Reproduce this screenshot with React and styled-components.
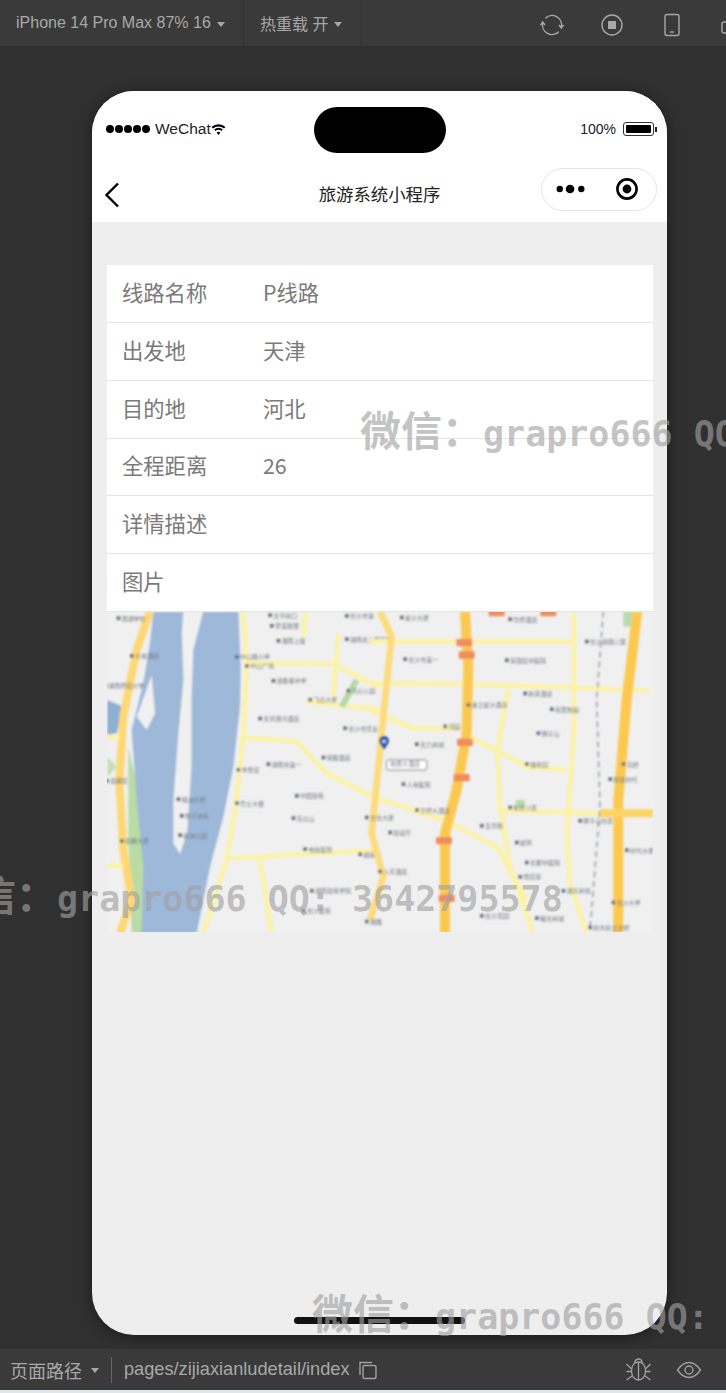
import React from "react";
import styled, { createGlobalStyle } from "styled-components";

const CJK = `"Liberation Sans", "Noto Sans CJK SC", sans-serif`;

const rows = [
  { label: "线路名称", value: "P线路" },
  { label: "出发地", value: "天津" },
  { label: "目的地", value: "河北" },
  { label: "全程距离", value: "26" },
  { label: "详情描述", value: "" },
  { label: "图片", value: "" },
];

// map coordinates are in 3x units, one group for each half of the picture
const leftPale = [
  "M430 30 L440 200 L430 400 L410 600 L380 780 L310 1000",
  "M430 412 L590 425 L680 520 L830 595",
  "M440 190 L700 192 L840 262",
  "M715 100 L700 290",
  "M615 35 L612 110",
  "M620 305 L840 328",
  "M390 775 L840 750",
  "M480 780 L515 1000",
  "M20 410 L60 412",
  "M20 795 L70 800",
];
const leftLabels = [
  [65, 62, "南湖学校"], [520, 53, "太平街口"], [525, 85, "贾谊故居"], [545, 130, "湘南上座"],
  [750, 125, "湖南省人民医院"], [750, 55, "长沙市第"], [105, 175, "大信酒店"], [420, 178, "中山路小学"],
  [450, 205, "中山广场"], [530, 250, "连胜巷中学"], [640, 307, "飞达大厦"], [755, 280, "天心公园"],
  [490, 363, "天鸿港湾酒店"], [745, 392, "长沙市农业"], [680, 480, "铁路酒店"], [515, 500, "湖南省第一"],
  [425, 517, "朱张渡"], [600, 595, "中国建筑"], [420, 617, "巴士大楼"], [590, 662, "东瓜山"],
  [245, 605, "橘洲大桥"], [255, 655, "桔子洲头"], [250, 713, "橘洲公园"], [75, 730, "岳麓大厦"],
  [625, 755, "电信医院"], [790, 770, "邮政路"], [645, 880, "湖南建筑学院"], [620, 940, "长沙医院"],
  [30, 550, "岳麓区"], [25, 265, "湖南师范大学"],
];
const rightPale = [
  "M0 125 L610 125",
  "M0 250 L300 252 L840 272",
  "M612 35 L612 400 L590 700 L600 850 L650 1000",
  "M0 330 L130 385 L270 385",
  "M300 410 L470 500 L590 510",
  "M415 270 L382 450 L390 620 L420 800 L490 1000",
  "M20 595 L220 660 L380 740 L470 900",
  "M390 632 L700 640",
];
const rightLabels = [
  [105, 60, "星沙大厦"], [430, 65, "华侨酒店"], [115, 185, "长沙市第一"], [420, 188, "芙蓉区中医院"],
  [660, 132, "长沙铁路公寓"], [475, 288, "新芙酒店"], [555, 335, "芭蕾舞蹈"], [305, 322, "金之星大酒店"],
  [235, 387, "河园"], [150, 440, "天六商城"], [515, 407, "狮子山"], [480, 500, "福寿园"],
  [110, 560, "人寿医院"], [150, 638, "华侨大酒店"], [430, 630, "新民小区"], [345, 685, "五华路"],
  [70, 705, "建设厅"], [450, 735, "邮局"], [480, 795, "长郡中医院"], [40, 822, "人乐酒店"],
  [460, 838, "雨花亭"], [590, 880, "湘天商城"], [345, 955, "白沙花园"], [510, 962, "曙光商城"],
  [640, 670, "狮子山社区"], [770, 500, "高桥"], [730, 545, "财富时代"], [780, 758, "时代大厦"],
  [740, 915, "长沙大学"], [0, 972, "湘雅"], [0, 660, "文化大厦"], [670, 990, "树木岭立交桥"],
];
const badges = [[283, 128], [290, 165], [285, 427], [275, 533], [222, 722], [230, 895], [380, 38], [535, 38]];

const WatermarkText = () => (
  <>
    <WatermarkCjk>微信：</WatermarkCjk>grapro666 QQ: 3642795578
  </>
);

const Poi = ({ x, y, text }) => (
  <>
    <rect x={x - 15} y={y - 13} width="11" height="11" fill="#66727e" />
    <MapLabel x={x} y={y}>
      {text}
    </MapLabel>
  </>
);

const App = () => (
  <Screen>
    <GlobalStyle />
    <TopBar>
      <TopSegment $wide>
        iPhone 14 Pro Max 87% 16<Caret />
      </TopSegment>
      <TopSegment>
        热重载 开<Caret />
      </TopSegment>
      <TopIcons>
        <ToolIcon viewBox="0 0 24 24">
          <path d="M5.3 5.3 A9.5 9.5 0 0 1 21.3 14 M18.7 18.7 A9.5 9.5 0 0 1 2.7 10" />
          <path d="M19 12 L21.3 15 L23.5 12 M0.5 12 L2.7 9 L5 12" />
        </ToolIcon>
        <ToolIcon viewBox="0 0 24 24">
          <circle cx="12" cy="12" r="10" />
          <rect x="8" y="8" width="8" height="8" fill="#a8a8a8" stroke="none" />
        </ToolIcon>
        <ToolIcon viewBox="0 0 24 24">
          <rect x="5" y="1.5" width="14" height="21" rx="2" />
          <path d="M10 19 H14" />
        </ToolIcon>
        <ToolIcon viewBox="0 0 24 24">
          <rect x="2" y="9" width="14" height="11" rx="2" />
        </ToolIcon>
      </TopIcons>
    </TopBar>

    <Stage>
      <Phone>
        <StatusBar>
          <Signal>
            {[0, 1, 2, 3, 4].map((i) => (
              <Dot key={i} />
            ))}
          </Signal>
          <Carrier>WeChat</Carrier>
          <svg width="15" height="12" viewBox="0 0 15 12">
            <path d="M0.5 4 A10 10 0 0 1 14.5 4 L13 5.6 A8 8 0 0 0 2 5.6 Z" fill="#000" />
            <path d="M3.2 6.6 A6 6 0 0 1 11.8 6.6 L10.4 8 A4 4 0 0 0 4.6 8 Z" fill="#000" />
            <path d="M7.5 12 L5.6 9.6 A3 3 0 0 1 9.4 9.6 Z" fill="#000" />
          </svg>
          <Island />
          <Percent>100%</Percent>
          <Battery>
            <BatteryFill />
          </Battery>
          <BatteryCap />
        </StatusBar>
        <NavBar>
          <BackIcon width="16" height="26" viewBox="0 0 16 26">
            <path d="M14 1.5 L2.5 13 L14 24.5" fill="none" stroke="#000" strokeWidth="2.4" />
          </BackIcon>
          <NavTitle>旅游系统小程序</NavTitle>
          <Capsule>
            <svg width="30" height="12" viewBox="0 0 32 12">
              <circle cx="4" cy="6" r="3.4" fill="#000" />
              <circle cx="15" cy="6" r="4.6" fill="#000" />
              <circle cx="27" cy="6" r="3.4" fill="#000" />
            </svg>
            <svg width="24" height="24" viewBox="0 0 24 24">
              <circle cx="12" cy="12" r="9.6" fill="none" stroke="#000" strokeWidth="2.6" />
              <circle cx="12" cy="12" r="4.4" fill="#000" />
            </svg>
          </Capsule>
        </NavBar>
        <Content>
          <DetailList>
            {rows.map((row) => (
              <DetailRow key={row.label}>
                <RowLabel>{row.label}</RowLabel>
                <RowValue>{row.value}</RowValue>
              </DetailRow>
            ))}
          </DetailList>
          <MapPicture viewBox="0 0 546 320" preserveAspectRatio="none">
            <defs>
              <filter id="soft" x="0" y="0" width="100%" height="100%">
                <feGaussianBlur stdDeviation="0.85" />
              </filter>
            </defs>
            <rect width="546" height="320" fill="#f0f0f0" />
            <g filter="url(#soft)">
              <g transform="translate(-7 -12) scale(0.3333)">
                <path d="M85 440 L130 640 L135 1000 L95 1000 L85 700 Z" fill="#b9dba4" />
                <path d="M22 470 L50 500 L22 530 Z" fill="#c5dfb4" />
                <path d="M22 300 L70 320 L50 400 L22 405 Z" fill="#8fb0d4" />
                <path
                  d="M160 35 L250 35 L245 100 L250 240 L235 400 L220 600 L220 730 L240 762 L262 700 L275 500 L275 300 L280 150 L310 35 L415 35 L422 200 L420 320 L400 500 L370 650 L330 800 L290 1000 L125 1000 L130 800 L110 600 L95 390 L130 250 L150 130 Z"
                  fill="#9db8d8"
                />
                <path d="M155 225 L165 340 L140 390 L110 350 Z" fill="#f0f0f0" />
                <path d="M150 35 L110 150 L70 350 L58 550 L70 750 L95 900 L60 1000" fill="none" stroke="#fdd874" strokeWidth="24" />
                {leftPale.map((d) => (
                  <PaleRoad key={d} d={d} />
                ))}
                <path d="M725 320 L770 240" stroke="#b5d8a8" strokeWidth="18" />
                {leftLabels.map(([x, y, text]) => (
                  <Poi key={text} x={x} y={y} text={text} />
                ))}
              </g>
              <g transform="translate(263 -12) scale(0.3333)">
                <path d="M760 35 H790 V80 H760 Z" fill="#b5dcae" />
                <rect x="437" y="600" width="28" height="22" fill="#b9dca8" />
                {rightPale.map((d) => (
                  <PaleRoad key={d} d={d} />
                ))}
                <path d="M30 35 L65 110 L45 300 L15 600 L5 700 L40 830 L0 960" fill="none" stroke="#fddc7e" strokeWidth="20" />
                <path d="M285 35 L295 200 L290 400 L260 570 L225 700 L225 1000" fill="none" stroke="#fcc950" strokeWidth="30" />
                <path d="M802 35 L770 300 L745 600 L745 1000" fill="none" stroke="#fcc950" strokeWidth="30" />
                <path d="M690 640 H850" stroke="#fcd566" strokeWidth="24" />
                <path d="M700 35 L680 300 L690 620 L660 990" fill="none" stroke="#8a94a0" strokeWidth="4" strokeDasharray="18 12" />
                {badges.map(([x, y]) => (
                  <rect key={`${x}-${y}`} x={x - 24} y={y - 11} width="48" height="22" rx="4" fill="#ef8d5f" />
                ))}
                {rightLabels.map(([x, y, text]) => (
                  <Poi key={text} x={x} y={y} text={text} />
                ))}
                <rect x="50" y="480" width="120" height="30" rx="5" fill="#fff" stroke="#777" strokeWidth="3" />
                <MapLabel x="60" y="497">
                  地质大酒店
                </MapLabel>
                <path d="M42 450 L28 428 A15 15 0 1 1 56 428 Z" fill="#2b5aa8" />
                <circle cx="42" cy="424" r="5" fill="#dfe8f8" />
              </g>
            </g>
          </MapPicture>
        </Content>
        <HomeBar />
      </Phone>
    </Stage>

    <BottomBar>
      <PathLabel>
        页面路径<Caret />
      </PathLabel>
      <PathText>pages/zijiaxianludetail/index</PathText>
      <svg width="20" height="20" viewBox="0 0 20 20" fill="none" stroke="#a0a0a0" strokeWidth="1.4">
        <path d="M2 15 V2.5 H14" />
        <rect x="5" y="5.5" width="13" height="13" rx="1.5" />
      </svg>
      <BottomIcons>
        <svg width="25" height="23" viewBox="0 0 25 23" fill="none" stroke="#a0a0a0" strokeWidth="1.3">
          <path d="M12.5 4 C8 4 5.5 8 5.5 13 C5.5 19 9 22 12.5 22 C16 22 19.5 19 19.5 13 C19.5 8 17 4 12.5 4 Z M12.5 4 V22" />
          <path d="M8.5 5.5 C9 2.5 10.5 1 12.5 1 C14.5 1 16 2.5 16.5 5.5 M0.5 6 L5.5 11 M24.5 6 L19.5 11 M0.5 13.5 H5 M24.5 13.5 H20 M0.5 22 L6 18 M24.5 22 L19 18" />
        </svg>
        <svg width="26" height="18" viewBox="0 0 26 18" fill="none" stroke="#a0a0a0" strokeWidth="1.4">
          <path d="M1.5 9 C6 2.5 9.5 1.5 13 1.5 C16.5 1.5 20 2.5 24.5 9 C20 15.5 16.5 16.5 13 16.5 C9.5 16.5 6 15.5 1.5 9 Z" />
          <circle cx="13" cy="9" r="4" />
        </svg>
      </BottomIcons>
    </BottomBar>
    <BottomStrip />

    <Watermark $left={360} $top={407}><WatermarkText /></Watermark>
    <Watermark $left={-66} $top={872}><WatermarkText /></Watermark>
    <Watermark $left={312} $top={1290}><WatermarkText /></Watermark>
  </Screen>
);

export default App;

const GlobalStyle = createGlobalStyle`
  html, body {
    margin: 0;
    padding: 0;
    background: #303030;
    font-family: ${CJK};
  }
`;

const Screen = styled.div`
  position: relative;
  width: 726px;
  height: 1393px;
  overflow: hidden;
  display: flex;
  flex-direction: column;
  background: #303030;
`;

const TopBar = styled.div`
  height: 46px;
  display: flex;
  align-items: stretch;
  background: #3a3a3a;
  color: #a8a8a8;
  font-size: 16px;
`;

const TopSegment = styled.div`
  flex: none;
  display: flex;
  align-items: center;
  gap: 4px;
  padding: 0 16px;
  width: ${(p) => (p.$wide ? "244px" : "118px")};
  box-sizing: border-box;
  border-right: 1px solid #333;
  white-space: nowrap;
`;

const Caret = styled.span`
  display: inline-block;
  width: 0;
  height: 0;
  margin-left: 2px;
  margin-top: 2px;
  border-left: 4px solid transparent;
  border-right: 4px solid transparent;
  border-top: 5px solid #a8a8a8;
`;

const TopIcons = styled.div`
  flex: none;
  display: flex;
  align-items: center;
  gap: 36px;
  margin: 4px 0 0 178px;
`;

const ToolIcon = styled.svg`
  width: 24px;
  height: 24px;
  flex: none;
  fill: none;
  stroke: #a8a8a8;
  stroke-width: 1.4;
`;

const Stage = styled.div`
  flex: 1;
  padding: 45px 0 0 92px;
`;

const Phone = styled.div`
  position: relative;
  width: 575px;
  height: 1244px;
  display: flex;
  flex-direction: column;
  border-radius: 42px;
  overflow: hidden;
  background: #eee;
  box-shadow: 0 2px 14px rgba(0, 0, 0, 0.45);
`;

const StatusBar = styled.div`
  position: relative;
  height: 76px;
  display: flex;
  align-items: center;
  padding: 0 10px 0 14px;
  background: #fff;
  color: #222;
`;

const Signal = styled.div`
  display: flex;
  gap: 1px;
  margin-right: 5px;
`;

const Dot = styled.span`
  width: 8px;
  height: 8px;
  border-radius: 50%;
  background: #000;
`;

const Carrier = styled.span`
  font-size: 15.5px;
`;

const Island = styled.div`
  position: absolute;
  left: 222px;
  top: 16px;
  width: 132px;
  height: 46px;
  border-radius: 23px;
  background: #000;
`;

const Percent = styled.span`
  margin-left: auto;
  margin-right: 7px;
  font-size: 14px;
`;

const Battery = styled.div`
  width: 31px;
  height: 14px;
  box-sizing: border-box;
  padding: 2px;
  border: 1px solid #333;
  border-radius: 3px;
`;

const BatteryFill = styled.div`
  width: 100%;
  height: 100%;
  border-radius: 1px;
  background: #000;
`;

const BatteryCap = styled.span`
  width: 2px;
  height: 5px;
  margin-left: 1px;
  background: #222;
`;

const NavBar = styled.div`
  position: relative;
  height: 55px;
  display: flex;
  align-items: center;
  justify-content: space-between;
  padding: 0 10px 11px 12px;
  box-sizing: border-box;
  background: #fff;
`;

const BackIcon = styled.svg`
  margin-top: 12px;
`;

const NavTitle = styled.div`
  position: absolute;
  left: 0;
  right: 0;
  top: 17px;
  text-align: center;
  font-size: 17.4px;
  line-height: 22px;
  color: #222;
`;

const Capsule = styled.div`
  position: relative;
  width: 116px;
  height: 43px;
  box-sizing: border-box;
  display: flex;
  align-items: center;
  justify-content: space-between;
  padding: 0 17px 0 14px;
  border: 1px solid #e4e4e4;
  border-radius: 22px;
  background: #fff;
`;

const Content = styled.div`
  flex: 1;
  padding: 43px 14px 0 15px;
`;

const DetailList = styled.div`
  display: flex;
  flex-direction: column;
  background: #fff;
`;

const DetailRow = styled.div`
  height: 57.85px;
  box-sizing: border-box;
  display: flex;
  align-items: center;
  padding: 0 0 3px 15px;
  border-bottom: 1px solid #e4e4e4;
  font-family: "Noto Sans CJK SC", sans-serif;
  font-size: 21.3px;
  line-height: 30px;
  color: #7a7a7a;
`;

const RowLabel = styled.span`
  width: 141px;
  flex: none;
`;

const RowValue = styled.span``;

const MapPicture = styled.svg`
  display: block;
  width: 546px;
  height: 320px;
`;

const PaleRoad = styled.path`
  fill: none;
  stroke: #fdf3a6;
  stroke-width: 14;
`;

const MapLabel = styled.text`
  font-family: "Noto Sans CJK SC", sans-serif;
  font-size: 18px;
  fill: #707880;
`;

const HomeBar = styled.div`
  position: absolute;
  left: 202px;
  bottom: 11px;
  width: 171px;
  height: 7px;
  border-radius: 4px;
  background: #111;
`;

const BottomBar = styled.div`
  height: 41px;
  display: flex;
  align-items: center;
  padding: 0 24px 0 10px;
  background: #3a3a3a;
  color: #a8a8a8;
  font-size: 18px;
`;

const PathLabel = styled.div`
  display: flex;
  align-items: center;
  gap: 7px;
  padding-right: 12px;
  margin-right: 12px;
  border-right: 1px solid #666;
`;

const PathText = styled.span`
  font-size: 18.2px;
  margin-right: 9px;
`;

const BottomIcons = styled.div`
  display: flex;
  align-items: center;
  gap: 25px;
  margin-left: auto;
`;

const BottomStrip = styled.div`
  height: 3px;
  background: #dfe6ea;
`;

const Watermark = styled.div`
  position: absolute;
  left: ${(p) => p.$left}px;
  top: ${(p) => p.$top}px;
  white-space: nowrap;
  font-family: "DejaVu Sans Mono", monospace;
  font-weight: 700;
  font-size: 35px;
  line-height: 42px;
  color: rgba(161, 161, 161, 0.63);
  pointer-events: none;
`;

const WatermarkCjk = styled.span`
  font-family: "Noto Sans CJK SC", sans-serif;
  font-size: 41px;
`;
